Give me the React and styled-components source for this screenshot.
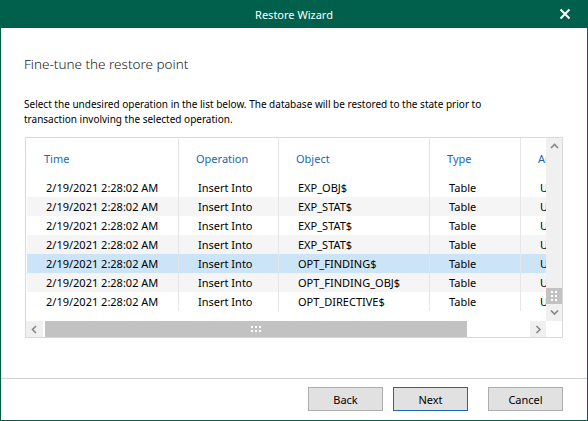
import React from "react";
import styled, { createGlobalStyle } from "styled-components";

const GREEN = "#00604b";

const GlobalStyle = createGlobalStyle`
  html, body { margin: 0; padding: 0; background: #fff; }
  body { font-family: "Noto Sans", "Open Sans", sans-serif; color: #000; }
  * { box-sizing: border-box; }
`;

const Window = styled.div`
  width: 588px;
  height: 421px;
  display: flex;
  flex-direction: column;
  background: #fff;
  overflow: hidden;
`;

const TitleBar = styled.div`
  height: 28px;
  flex: none;
  background: ${GREEN};
  color: #fff;
  display: grid;
  grid-template-columns: 46px 1fr 46px;
  align-items: center;
  font-size: 11px;
`;

const Title = styled.div`
  grid-column: 2;
  text-align: center;
`;

const CloseButton = styled.button`
  grid-column: 3;
  justify-self: center;
  width: 12px;
  height: 12px;
  padding: 0;
  border: 0;
  background: none;
  display: flex;
  color: #fff;
`;

const Frame = styled.div`
  flex: 1;
  min-height: 0;
  display: flex;
  flex-direction: column;
  border: 1px solid ${GREEN};
  border-top: 0;
`;

const Content = styled.div`
  flex: 1;
  display: flex;
  flex-direction: column;
  padding: 0 24px;
`;

const Heading = styled.h1`
  margin: 26px 0 0 -1px;
  font-size: 13.5px;
  font-weight: 300;
  line-height: 20px;
  color: #1a1a1a;
`;

const Description = styled.p`
  margin: 23px 0 0 -1px;
  max-width: 490px;
  font-size: 10px;
  line-height: 15px;
`;

const ListBox = styled.div`
  margin-top: 10px;
  width: 538px;
  height: 201px;
  border: 1px solid #d9d9d9;
  display: grid;
  grid-template-columns: 1fr 16px;
  grid-template-rows: 1fr 16px;
  font-size: 11px;
`;

const Viewport = styled.div`
  overflow: hidden;
  padding-left: 1px;
`;

const Row = styled.div`
  display: flex;
  width: max-content;
  height: 19px;
  background: ${(p) => (p.$selected ? "#cce4f7" : p.$alt ? "#f5f5f5" : "#fff")};
`;

const HeaderRow = styled(Row)`
  height: 40px;
  color: #1767b3;
`;

const Cell = styled.div`
  flex: none;
  width: ${(p) => p.$w}px;
  height: 100%;
  padding-left: ${(p) => (p.$header ? 17 : 19)}px;
  border-right: 1px solid #e6e6e6;
  display: flex;
  align-items: center;
  white-space: nowrap;
  overflow: hidden;
`;

const VScroll = styled.div`
  background: #f0f0f0;
  display: flex;
  flex-direction: column;
`;

const ArrowCell = styled.div`
  flex: none;
  width: ${(p) => p.$w || 16}px;
  height: ${(p) => p.$h || 16}px;
  background: #f0f0f0;
  display: flex;
  align-items: center;
  justify-content: center;
  color: #868686;
`;

const Spacer = styled.div`
  flex: 1;
`;

const Thumb = styled.div`
  flex: none;
  background: #c2c2c2;
  display: flex;
  align-items: center;
  justify-content: center;
  width: ${(p) => (p.$w ? `${p.$w}px` : "auto")};
  height: ${(p) => (p.$h ? `${p.$h}px` : "auto")};
  margin-left: ${(p) => p.$ml || 0}px;
`;

const Grip = styled.div`
  display: grid;
  grid-template-columns: repeat(${(p) => p.$cols}, 2px);
  grid-auto-rows: 2px;
  gap: 2px;
`;

const Dot = styled.span`
  background: #fff;
`;

const HScroll = styled.div`
  display: flex;
  background: #fff;
`;

const Corner = styled.div`
  background: #fff;
`;

const Footer = styled.div`
  flex: none;
  height: 42px;
  border-top: 1px solid #d0d0d0;
  display: flex;
  justify-content: flex-end;
  align-items: flex-start;
  gap: 10px;
  padding: 8px 24px 0 0;
`;

const Button = styled.button`
  width: 75px;
  height: 24px;
  margin-left: ${(p) => (p.$spaced ? 10 : 0)}px;
  background: #e1e1e1;
  border: 1px solid ${(p) => (p.$primary ? "#1f67ad" : "#adadad")};
  font-family: inherit;
  font-size: 11px;
  color: #000;
  padding: 0;
`;

const Chevron = ({ dir }) => {
  const pts = {
    up: "1,5 4.5,1.5 8,5",
    down: "1,1.5 4.5,5 8,1.5",
    left: "5,1 1.5,4.5 5,8",
    right: "1.5,1 5,4.5 1.5,8",
  }[dir];
  const vertical = dir === "up" || dir === "down";
  return (
    <svg width={vertical ? 9 : 7} height={vertical ? 7 : 9} viewBox={vertical ? "0 0 9 7" : "0 0 7 9"}>
      <polyline points={pts} fill="none" stroke="currentColor" strokeWidth="1.6" />
    </svg>
  );
};

const GripDots = ({ cols, rows }) => (
  <Grip $cols={cols}>
    {Array.from({ length: cols * rows }).map((_, i) => (
      <Dot key={i} />
    ))}
  </Grip>
);

const columns = [
  { title: "Time", w: 152 },
  { title: "Operation", w: 100 },
  { title: "Object", w: 151 },
  { title: "Type", w: 91 },
  { title: "Author", w: 100 },
];

const objects = [
  "EXP_OBJ$",
  "EXP_STAT$",
  "EXP_STAT$",
  "EXP_STAT$",
  "OPT_FINDING$",
  "OPT_FINDING_OBJ$",
  "OPT_DIRECTIVE$",
];

const rows = objects.map((obj) => [
  "2/19/2021 2:28:02 AM",
  "Insert Into",
  obj,
  "Table",
  "UNKNOWN",
]);

export default function App() {
  return (
    <>
      <GlobalStyle />
      <Window>
        <TitleBar>
          <Title>Restore Wizard</Title>
          <CloseButton aria-label="Close">
            <svg width="12" height="12" viewBox="0 0 12 12">
              <path d="M1.5 1.5 L10.5 10.5 M10.5 1.5 L1.5 10.5" stroke="#fff" strokeWidth="2" />
            </svg>
          </CloseButton>
        </TitleBar>
        <Frame>
          <Content>
            <Heading>Fine-tune the restore point</Heading>
            <Description>
              Select the undesired operation in the list below. The database will be restored to the state prior to
              transaction involving the selected operation.
            </Description>
            <ListBox>
              <Viewport>
                <HeaderRow>
                  {columns.map((c) => (
                    <Cell key={c.title} $w={c.w} $header>
                      {c.title}
                    </Cell>
                  ))}
                </HeaderRow>
                {rows.map((r, i) => (
                  <Row key={i} $alt={i % 2 === 1} $selected={i === 4}>
                    {r.map((v, j) => (
                      <Cell key={j} $w={columns[j].w}>
                        {v}
                      </Cell>
                    ))}
                  </Row>
                ))}
              </Viewport>
              <VScroll>
                <ArrowCell $h={17}>
                  <Chevron dir="up" />
                </ArrowCell>
                <Spacer />
                <Thumb $h={16}>
                  <GripDots cols={2} rows={3} />
                </Thumb>
                <ArrowCell $h={17}>
                  <Chevron dir="down" />
                </ArrowCell>
              </VScroll>
              <HScroll>
                <ArrowCell $w={17}>
                  <Chevron dir="left" />
                </ArrowCell>
                <Thumb $w={422} $ml={2}>
                  <GripDots cols={3} rows={2} />
                </Thumb>
                <Spacer />
                <ArrowCell>
                  <Chevron dir="right" />
                </ArrowCell>
              </HScroll>
              <Corner />
            </ListBox>
          </Content>
          <Footer>
            <Button>Back</Button>
            <Button $primary>Next</Button>
            <Button $spaced>Cancel</Button>
          </Footer>
        </Frame>
      </Window>
    </>
  );
}
